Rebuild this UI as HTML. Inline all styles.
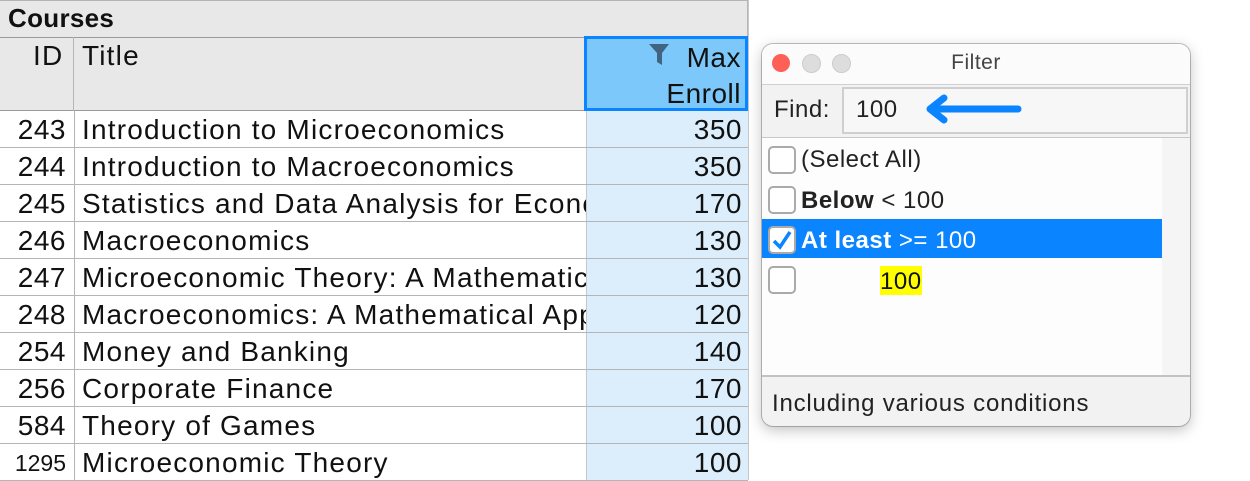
<!DOCTYPE html>
<html><head><meta charset="utf-8"><style>
body{margin:0;width:1250px;height:480px;background:#fff;position:relative;overflow:hidden;font-family:"Liberation Sans",sans-serif}
.a{position:absolute}
.t{font-size:28px;letter-spacing:1.2px;color:#111;white-space:nowrap;overflow:hidden}
.row{position:absolute;left:0;width:748px;height:36px;border-bottom:1px solid #b5b5b5}
.row div{position:absolute;top:0;height:36px;line-height:38px}
.id{left:0;width:66px;text-align:right;border-right:1px solid #b5b5b5;padding-right:8px;letter-spacing:0.5px}
.ti{left:82px;width:504px;overflow:hidden}
.mx{left:586px;width:155px;text-align:right;background:#dceefb;border-left:1px solid #c8c8c8;padding-right:7px;height:37px!important;letter-spacing:0.5px}
.f{font-family:"Liberation Sans",sans-serif;font-size:24px;letter-spacing:0.5px;color:#222;white-space:nowrap}
.cb{position:absolute;left:768px;width:24px;height:24px;border:2px solid #aaa;border-radius:5px;background:#fff}
</style></head><body>
<div class="a" style="left:0;top:0;width:747px;height:110px;background:#e8e8e8;border-right:1px solid #b5b5b5;border-bottom:1px solid #9a9a9a"></div>
<div class="a t" style="left:0;top:0;width:748px;height:36px;border-bottom:1px solid #9a9a9a;border-top:1px solid #b5b5b5"></div>
<div class="a t" style="left:8px;top:3px;font-weight:bold;font-size:26px;letter-spacing:0.3px">Courses</div>
<div class="a" style="left:73px;top:37px;width:1px;height:74px;background:#b5b5b5"></div>
<div class="a t" style="left:33px;top:40px">ID</div>
<div class="a t" style="left:82px;top:40px">Title</div>
<div class="a" style="left:584px;top:36px;width:158px;height:69px;background:#7cc8fb;border:3px solid #0a84ff"></div>
<svg class="a" style="left:648px;top:43px" width="22" height="24"><path d="M1 1H21L14 10V22L9 19V10Z" fill="#3f6580"/></svg>
<div class="a t" style="left:600px;top:40px;width:141px;text-align:right;line-height:36px;letter-spacing:0.5px">Max<br>Enroll</div>
<div class="a" style="left:0;top:111px;width:748px;height:370px" >
<div class="row t" style="top:0"><div class="id">243</div><div class="ti">Introduction to Microeconomics</div><div class="mx">350</div></div>
<div class="row t" style="top:37px"><div class="id">244</div><div class="ti">Introduction to Macroeconomics</div><div class="mx">350</div></div>
<div class="row t" style="top:74px"><div class="id">245</div><div class="ti">Statistics and Data Analysis for Economics</div><div class="mx">170</div></div>
<div class="row t" style="top:111px"><div class="id">246</div><div class="ti">Macroeconomics</div><div class="mx">130</div></div>
<div class="row t" style="top:148px"><div class="id">247</div><div class="ti">Microeconomic Theory: A Mathematical Approach</div><div class="mx">130</div></div>
<div class="row t" style="top:185px"><div class="id">248</div><div class="ti">Macroeconomics: A Mathematical Approach</div><div class="mx">120</div></div>
<div class="row t" style="top:222px"><div class="id">254</div><div class="ti">Money and Banking</div><div class="mx">140</div></div>
<div class="row t" style="top:259px"><div class="id">256</div><div class="ti">Corporate Finance</div><div class="mx">170</div></div>
<div class="row t" style="top:296px"><div class="id">584</div><div class="ti">Theory of Games</div><div class="mx">100</div></div>
<div class="row t" style="top:333px"><div class="id" style="font-size:23px;letter-spacing:0">1295</div><div class="ti">Microeconomic Theory</div><div class="mx">100</div></div>
</div>
<div class="a" style="left:748px;top:0;width:1px;height:480px;background:#c8c8c8"></div>

<div class="a" style="left:762px;top:44px;width:428px;height:382px;border-radius:11px;background:#f2f2f2;box-shadow:0 4px 14px rgba(0,0,0,.25),0 0 0 1px #c4c4c4;overflow:hidden">
<div class="a" style="left:0;top:0;width:428px;height:40px;background:#fbfbfb;border-bottom:1px solid #d0d0d0"></div>
<div class="a" style="left:10px;top:10px;width:18px;height:18px;border-radius:50%;background:#fe5f57"></div>
<div class="a" style="left:40px;top:10px;width:17px;height:17px;border-radius:50%;background:#ddd;border:1px solid #ccc"></div>
<div class="a" style="left:70px;top:10px;width:17px;height:17px;border-radius:50%;background:#ddd;border:1px solid #ccc"></div>
<div class="a f" style="left:0;width:428px;top:7px;text-align:center;color:#444;font-size:21px">Filter</div>
<div class="a f" style="left:12px;top:52px">Find:</div>
<div class="a" style="left:80px;top:43px;width:342px;height:43px;background:#f7f7f7;border:2px solid #cfcfcf"></div>
<div class="a f" style="left:94px;top:52px">100</div>
<svg class="a" style="left:160px;top:50px" width="100" height="34"><path d="M96 15H10M22 4L8 15L22 26" stroke="#0a84ff" stroke-width="7" fill="none" stroke-linecap="round" stroke-linejoin="round"/></svg>
<div class="a" style="left:0;top:93px;width:400px;height:238px;background:#fdfdfd;border-top:1px solid #c8c8c8"></div>
<div class="a" style="left:400px;top:93px;width:28px;height:238px;background:#f5f5f5;border-top:1px solid #c8c8c8"></div>
<div class="a" style="left:0;top:175px;width:400px;height:39px;background:#0a84ff"></div>
<div class="a" style="left:0;top:331px;width:428px;height:2px;background:#c2c2c2"></div>
<div class="a f" style="left:10px;top:346px;letter-spacing:0.8px">Including various conditions</div>
</div>
<div class="cb" style="top:146px"></div>
<div class="a f" style="left:801px;top:146px">(Select All)</div>
<div class="cb" style="top:186px"></div>
<div class="a f" style="left:801px;top:187px"><b>Below</b> &lt; 100</div>
<div class="cb" style="top:226px"></div>
<svg class="a" style="left:770px;top:228px" width="24" height="24"><path d="M4 13L10 19L20 4" stroke="#0a84ff" stroke-width="3.5" fill="none"/></svg>
<div class="a f" style="left:801px;top:227px;color:#fff"><b>At least</b> &gt;= 100</div>
<div class="cb" style="top:266px"></div>
<div class="a f" style="left:880px;top:266px;background:#ffff00;height:29px;line-height:31px;width:42px;color:#111">100</div>
</body></html>
